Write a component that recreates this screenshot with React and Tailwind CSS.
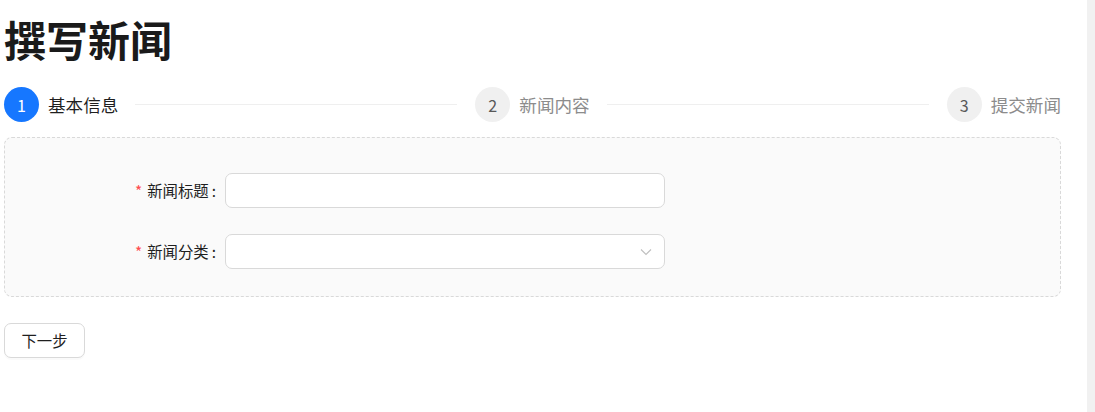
import React from 'react';

const FONT = "font-['Noto_Sans_CJK_SC','Noto_Sans',sans-serif]";

// ─── Step item ────────────────────────────────────────────────────────────────
function Step({ num, title, active, last }) {
    return (
        <div className={`flex items-center ${last ? '' : 'flex-1'}`}>
            <div
                className={`w-[35px] h-[35px] rounded-full flex items-center justify-center text-[16px] shrink-0
                    ${active ? 'bg-[#1677ff] text-white' : 'bg-[#f0f0f0] text-[#595959]'}`}
            >
                {num}
            </div>
            <span
                className={`ml-[9px] text-[17.6px] leading-[35px] whitespace-nowrap ${active ? 'text-[#1f1f1f]' : 'text-[#8c8c8c]'}`}
            >
                {title}
            </span>
            {!last && <div className="flex-1 h-px bg-[#efefef] ml-[17px] mr-[18px]" />}
        </div>
    );
}

// ─── Form row ─────────────────────────────────────────────────────────────────
function FormRow({ label, select }) {
    return (
        <div className="flex items-center h-[35px]">
            <label className="w-[220px] flex justify-end items-center pr-[9px] text-[15.4px] text-[#1f1f1f] leading-[35px]">
                <span className="text-[#ff4d4f] mr-[5px]">*</span>
                {label}
                <span className="ml-[3px]">:</span>
            </label>
            <div className="w-[440px] h-[35px] bg-white border border-[#d9d9d9] rounded-[7px] flex items-center justify-end pr-[12px]">
                {select && (
                    <svg width="12" height="8" viewBox="0 0 12 8" fill="none">
                        <path d="M1 1.5 L6 6.5 L11 1.5" stroke="#bfbfbf" strokeWidth="1.1" />
                    </svg>
                )}
            </div>
        </div>
    );
}

export default function App() {
    return (
        <div className={`flex min-h-[412px] bg-white ${FONT}`}>
            <div className="flex-1">
                <div className="w-[1057px] ml-1">
                    <h1 className="mt-[13px] text-[42px] leading-[52px] font-bold text-[#1a1a1a]">撰写新闻</h1>

                    {/* Steps */}
                    <div className="flex items-center mt-[22px]">
                        <Step num="1" title="基本信息" active />
                        <Step num="2" title="新闻内容" />
                        <Step num="3" title="提交新闻" last />
                    </div>

                    {/* Form card */}
                    <div className="mt-[15px] border border-dashed border-[#d9d9d9] bg-[#fafafa] rounded-[8px] pt-[35px] pb-[27px] flex flex-col gap-[26px]">
                        <FormRow label="新闻标题" />
                        <FormRow label="新闻分类" select />
                    </div>

                    <button className="mt-[26px] w-[81px] h-[35px] border border-[#d9d9d9] rounded-[7px] bg-white text-[15.4px] text-[#1f1f1f] shadow-[0_2px_0_rgba(0,0,0,0.02)]">
                        下一步
                    </button>
                </div>
            </div>
            {/* scrollbar track */}
            <div className="w-2 shrink-0 bg-[#f1f1f1]" />
        </div>
    );
}
